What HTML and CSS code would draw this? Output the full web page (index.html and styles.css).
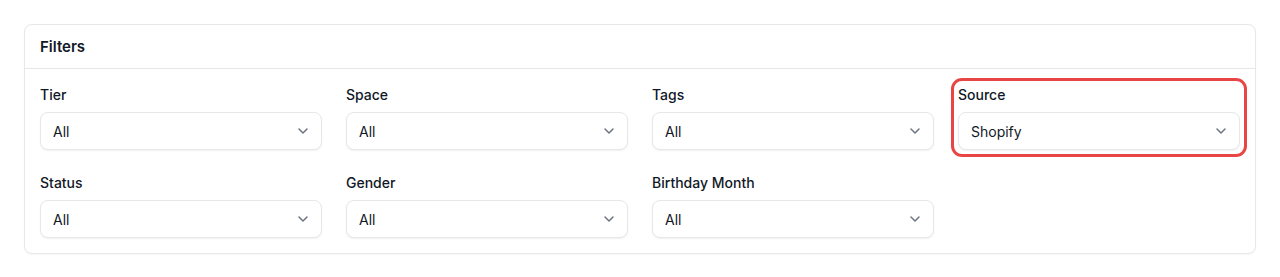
FILE: index.html
```html
<!DOCTYPE html>
<html lang="en">
<head>
  <meta charset="UTF-8" />
  <meta name="viewport" content="width=device-width, initial-scale=1" />
  <title>Filters</title>
  <link rel="stylesheet" href="styles.css">
</head>
<body>

<div class="card">
  <div class="card-header">Filters</div>

  <div class="filters">
    <div class="field">
      <label for="tier">Tier</label>
      <div class="select-wrap">
        <select id="tier"><option>All</option></select>
        <svg class="chevron" viewBox="0 0 16 16"><path d="M4 6l4 4 4-4" /></svg>
      </div>
    </div>

    <div class="field">
      <label for="space">Space</label>
      <div class="select-wrap">
        <select id="space"><option>All</option></select>
        <svg class="chevron" viewBox="0 0 16 16"><path d="M4 6l4 4 4-4" /></svg>
      </div>
    </div>

    <div class="field">
      <label for="tags">Tags</label>
      <div class="select-wrap">
        <select id="tags"><option>All</option></select>
        <svg class="chevron" viewBox="0 0 16 16"><path d="M4 6l4 4 4-4" /></svg>
      </div>
    </div>

    <div class="field highlighted">
      <label for="source">Source</label>
      <div class="select-wrap">
        <select id="source"><option>Shopify</option><option>All</option></select>
        <svg class="chevron" viewBox="0 0 16 16"><path d="M4 6l4 4 4-4" /></svg>
      </div>
    </div>

    <div class="field">
      <label for="status">Status</label>
      <div class="select-wrap">
        <select id="status"><option>All</option></select>
        <svg class="chevron" viewBox="0 0 16 16"><path d="M4 6l4 4 4-4" /></svg>
      </div>
    </div>

    <div class="field">
      <label for="gender">Gender</label>
      <div class="select-wrap">
        <select id="gender"><option>All</option></select>
        <svg class="chevron" viewBox="0 0 16 16"><path d="M4 6l4 4 4-4" /></svg>
      </div>
    </div>

    <div class="field">
      <label for="birthday">Birthday Month</label>
      <div class="select-wrap">
        <select id="birthday"><option>All</option></select>
        <svg class="chevron" viewBox="0 0 16 16"><path d="M4 6l4 4 4-4" /></svg>
      </div>
    </div>
  </div>
</div>

</body>
</html>
```

FILE: styles.css
```css
:root {
  --text-color: #111827;
  --border-color: #e5e7eb;
  --muted-color: #6b7280;
  --accent-red: #e84545;
}

* {
  box-sizing: border-box;
}

body {
  margin: 0;
  padding: 24px;
  background: #fff;
  color: var(--text-color);
  font-family: Inter, "Noto Sans", Arial, sans-serif;
  font-size: 14px;
}

.card {
  border: 1px solid var(--border-color);
  border-radius: 8px;
  background: #fff;
  box-shadow: 0 1px 2px rgba(0, 0, 0, 0.04);
}

.card-header {
  padding: 11px 15px 11px;
  line-height: 21px;
  font-size: 15px;
  font-weight: 600;
  border-bottom: 1px solid var(--border-color);
}

.filters {
  display: grid;
  grid-template-columns: repeat(4, 1fr);
  column-gap: 24px;
  row-gap: 23px;
  padding: 16px 15px 15px;
}

.field label {
  display: block;
  line-height: 20px;
  font-weight: 500;
  margin-bottom: 7px;
}

.field.highlighted {
  outline: 3px solid var(--accent-red);
  outline-offset: 4px;
  border-radius: 4px;
}

.select-wrap {
  position: relative;
}

select {
  appearance: none;
  -webkit-appearance: none;
  width: 100%;
  height: 38px;
  padding: 0 36px 0 12px;
  border: 1px solid var(--border-color);
  border-radius: 8px;
  background: #fff;
  color: var(--text-color);
  font-family: inherit;
  font-size: 14px;
  box-shadow: 0 1px 2px rgba(0, 0, 0, 0.06);
}

.chevron {
  position: absolute;
  right: 11px;
  top: 11px;
  width: 16px;
  height: 16px;
  fill: none;
  stroke: var(--muted-color);
  stroke-width: 1.5;
  stroke-linecap: round;
  stroke-linejoin: round;
  pointer-events: none;
}
```
